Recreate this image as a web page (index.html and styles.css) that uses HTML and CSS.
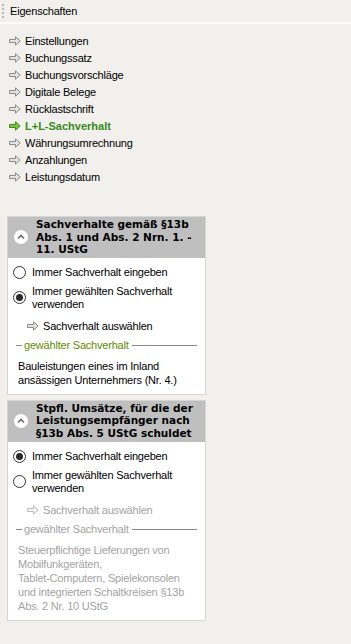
FILE: index.html
```html
<!DOCTYPE html>
<html lang="de">
<head>
    <meta charset="UTF-8">
    <title>Eigenschaften</title>
    <link rel="stylesheet" href="styles.css">
</head>
<body>
    <div class="header">
        <span class="grip"></span>
        <span class="header-title">Eigenschaften</span>
    </div>

    <ul class="nav">
        <li><svg class="arrow" viewBox="0 0 12 10"><path d="M0.5 3.5H6.5V0.8L11.2 5L6.5 9.2V6.5H0.5Z"/></svg>Einstellungen</li>
        <li><svg class="arrow" viewBox="0 0 12 10"><path d="M0.5 3.5H6.5V0.8L11.2 5L6.5 9.2V6.5H0.5Z"/></svg>Buchungssatz</li>
        <li><svg class="arrow" viewBox="0 0 12 10"><path d="M0.5 3.5H6.5V0.8L11.2 5L6.5 9.2V6.5H0.5Z"/></svg>Buchungsvorschläge</li>
        <li><svg class="arrow" viewBox="0 0 12 10"><path d="M0.5 3.5H6.5V0.8L11.2 5L6.5 9.2V6.5H0.5Z"/></svg>Digitale Belege</li>
        <li><svg class="arrow" viewBox="0 0 12 10"><path d="M0.5 3.5H6.5V0.8L11.2 5L6.5 9.2V6.5H0.5Z"/></svg>Rücklastschrift</li>
        <li class="active"><svg class="arrow" viewBox="0 0 12 10"><path d="M0.5 3.5H6.5V0.8L11.2 5L6.5 9.2V6.5H0.5Z"/></svg>L+L-Sachverhalt</li>
        <li><svg class="arrow" viewBox="0 0 12 10"><path d="M0.5 3.5H6.5V0.8L11.2 5L6.5 9.2V6.5H0.5Z"/></svg>Währungsumrechnung</li>
        <li><svg class="arrow" viewBox="0 0 12 10"><path d="M0.5 3.5H6.5V0.8L11.2 5L6.5 9.2V6.5H0.5Z"/></svg>Anzahlungen</li>
        <li><svg class="arrow" viewBox="0 0 12 10"><path d="M0.5 3.5H6.5V0.8L11.2 5L6.5 9.2V6.5H0.5Z"/></svg>Leistungsdatum</li>
    </ul>

    <div class="panel first">
        <div class="panel-head">
            <span class="toggle"><svg viewBox="0 0 8 6"><path d="M1 4.5L4 1.5L7 4.5"/></svg></span>
            <div class="panel-title">Sachverhalte gemäß §13b Abs. 1 und Abs. 2 Nrn. 1. - 11. UStG</div>
        </div>
        <div class="panel-body">
            <div class="radio"><span class="dot"></span><span>Immer Sachverhalt eingeben</span></div>
            <div class="radio checked"><span class="dot"></span><span>Immer gewählten Sachverhalt<br>verwenden</span></div>
            <div class="link"><svg class="arrow" viewBox="0 0 12 10"><path d="M0.5 3.5H6.5V0.8L11.2 5L6.5 9.2V6.5H0.5Z"/></svg>Sachverhalt auswählen</div>
            <div class="group"><span class="line short"></span><span class="legend">gewählter Sachverhalt</span><span class="line"></span></div>
            <div class="value">Bauleistungen eines im Inland ansässigen Unternehmers (Nr. 4.)</div>
        </div>
    </div>

    <div class="panel second">
        <div class="panel-head">
            <span class="toggle"><svg viewBox="0 0 8 6"><path d="M1 4.5L4 1.5L7 4.5"/></svg></span>
            <div class="panel-title">Stpfl. Umsätze, für die der Leistungsempfänger nach §13b Abs. 5 UStG schuldet</div>
        </div>
        <div class="panel-body disabled">
            <div class="radio checked"><span class="dot"></span><span>Immer Sachverhalt eingeben</span></div>
            <div class="radio"><span class="dot"></span><span>Immer gewählten Sachverhalt<br>verwenden</span></div>
            <div class="link"><svg class="arrow" viewBox="0 0 12 10"><path d="M0.5 3.5H6.5V0.8L11.2 5L6.5 9.2V6.5H0.5Z"/></svg>Sachverhalt auswählen</div>
            <div class="group"><span class="line short"></span><span class="legend">gewählter Sachverhalt</span><span class="line"></span></div>
            <div class="value">Steuerpflichtige Lieferungen von Mobilfunkgeräten,<br>Tablet-Computern, Spielekonsolen und integrierten Schaltkreisen §13b Abs. 2 Nr. 10 UStG</div>
        </div>
    </div>
</body>
</html>
```

FILE: styles.css
```css
body {
    margin: 0;
    background: #f1f0ec;
    font-family: 'Liberation Sans', Arial, sans-serif;
    font-size: 11px;
    color: #000;
}

.header {
    height: 22px;
    display: flex;
    align-items: center;
    border-bottom: 2px solid #fbfbfa;
}

.grip {
    width: 2px;
    height: 14px;
    margin-left: 2px;
    background: repeating-linear-gradient(to bottom, #b8b8b4 0 2px, transparent 2px 4px);
}

.header-title {
    margin-left: 6px;
    letter-spacing: -0.2px;
}

.nav {
    list-style: none;
    margin: 0;
    padding: 9px 0 0 9px;
}

.nav li {
    height: 16.9px;
    display: flex;
    align-items: center;
    letter-spacing: -0.2px;
}

.arrow {
    width: 12px;
    height: 10px;
    margin-right: 4px;
    flex: none;
}

.arrow path {
    fill: #e2e2e2;
    stroke: #8c8c8c;
    stroke-width: 1;
    stroke-linejoin: round;
}

.nav li.active {
    color: #3a8a1c;
    font-weight: bold;
    letter-spacing: 0;
}

.nav li.active .arrow path {
    fill: #7cc23a;
    stroke: #3d8c1a;
}

.panel {
    width: 197px;
    margin-left: 7px;
    border: 1px solid #d6d6d4;
    background: #fff;
}

.panel.first {
    margin-top: 31px;
}

.panel.second {
    margin-top: 5px;
}

.panel-head {
    background: #bfbfbf;
    display: flex;
    align-items: center;
    padding: 1px 0 2px;
}

.toggle {
    width: 14px;
    height: 14px;
    border-radius: 50%;
    background: #fff;
    margin: 0 8px 0 6px;
    flex: none;
    display: flex;
    align-items: center;
    justify-content: center;
}

.toggle svg {
    width: 8px;
    height: 6px;
}

.toggle path {
    fill: none;
    stroke: #6e6e6e;
    stroke-width: 1.6;
}

.panel-title {
    font-family: 'DejaVu Sans', sans-serif;
    font-weight: bold;
    font-size: 10.5px;
    line-height: 12.6px;
    letter-spacing: 0;
}

.panel-body {
    padding: 8px 8px 7px 5px;
}

.radio {
    display: flex;
    align-items: center;
    line-height: 13px;
    margin-bottom: 6px;
    letter-spacing: -0.2px;
}

.dot {
    width: 11px;
    height: 11px;
    border: 1px solid #333;
    border-radius: 50%;
    margin-right: 6px;
    flex: none;
    display: flex;
    align-items: center;
    justify-content: center;
    background: #fff;
}

.radio.checked .dot::after {
    content: "";
    width: 7px;
    height: 7px;
    border-radius: 50%;
    background: #2a2a2a;
}

.link {
    display: flex;
    align-items: center;
    margin: 9px 0 0 14px;
    line-height: 13px;
    letter-spacing: -0.2px;
}

.group {
    display: flex;
    align-items: center;
    margin: 6px 0 0 3px;
    line-height: 13px;
}

.line {
    flex: 1;
    height: 1px;
    background: #8a8a8a;
}

.line.short {
    flex: none;
    width: 6px;
    margin-right: 2px;
}

.legend {
    color: #5f8c00;
    margin-right: 3px;
    letter-spacing: -0.2px;
}

.value {
    margin: 7px 0 0 5px;
    line-height: 14px;
    letter-spacing: -0.2px;
}

.disabled .link,
.disabled .legend,
.disabled .value {
    color: #a3a3a3;
}

.disabled .arrow path {
    fill: #f2f2f2;
    stroke: #bdbdbd;
}
```
